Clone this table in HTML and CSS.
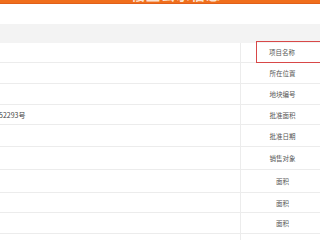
FILE: index.html
```html
<!DOCTYPE html>
<html lang="zh">
<head>
<meta charset="utf-8">
<link rel="stylesheet" href="styles.css">
</head>
<body>
<div class="topbar"><span class="title">楼盘公示信息</span></div>
<div class="gap"></div>
<div class="band"></div>
<div class="table">
  <div class="row r20"><div class="val"></div><div class="label"><div class="focus">项目名称</div></div></div>
  <div class="row r21"><div class="val"></div><div class="label">所在位置</div></div>
  <div class="row r21"><div class="val"></div><div class="label">地块编号</div></div>
  <div class="row r20"><div class="val"><span class="cut">52293号</span></div><div class="label">批准面积</div></div>
  <div class="row r22"><div class="val"></div><div class="label">批准日期</div></div>
  <div class="row r23"><div class="val"></div><div class="label">销售对象</div></div>
  <div class="row r23"><div class="val"></div><div class="label">面积</div></div>
  <div class="row r20"><div class="val"></div><div class="label">面积</div></div>
  <div class="row r21"><div class="val"></div><div class="label">面积</div></div>
  <div class="row r6"><div class="val"></div><div class="label"></div></div>
</div>
</body>
</html>
```
FILE: styles.css
```css
html, body {
  margin: 0;
  padding: 0;
  background: #ffffff;
  width: 320px;
  height: 240px;
  overflow: hidden;
  font-family: "Noto Sans CJK SC", "Noto Sans", sans-serif;
}
.topbar {
  height: 4px;
  background: #f06e1c;
  border-bottom: 1px solid #e0601a;
  overflow: hidden;
  padding-left: 131px;
  box-sizing: border-box;
}
.title {
  display: block;
  color: #fbe3d3;
  font-size: 14px;
  font-weight: bold;
  line-height: 14px;
  margin-top: -13px;
  letter-spacing: 1px;
}
.gap {
  height: 20px;
}
.band {
  height: 19px;
  background: #f3f3f3;
}
.table {
  display: flex;
  flex-direction: column;
}
.row {
  display: grid;
  grid-template-columns: 240px 84px;
  border-bottom: 1px solid #ececec;
  box-sizing: border-box;
}
.r6 { height: 6px; border-bottom: none; }
.r20 { height: 20px; }
.r21 { height: 21px; }
.r22 { height: 22px; }
.r23 { height: 23px; }
.val {
  display: flex;
  align-items: center;
  font-size: 7px;
  color: #444;
  overflow: hidden;
}
.cut {
  margin-left: -1px;
}
.label {
  border-left: 1px solid #ececec;
  display: flex;
  align-items: center;
  justify-content: center;
  font-size: 6.5px;
  color: #555;
}
.focus {
  align-self: stretch;
  margin: -2px 0 -1px 15px;
  flex: 1;
  border: 1px solid #d84848;
  display: flex;
  align-items: center;
  padding-left: 12px;
}
```
